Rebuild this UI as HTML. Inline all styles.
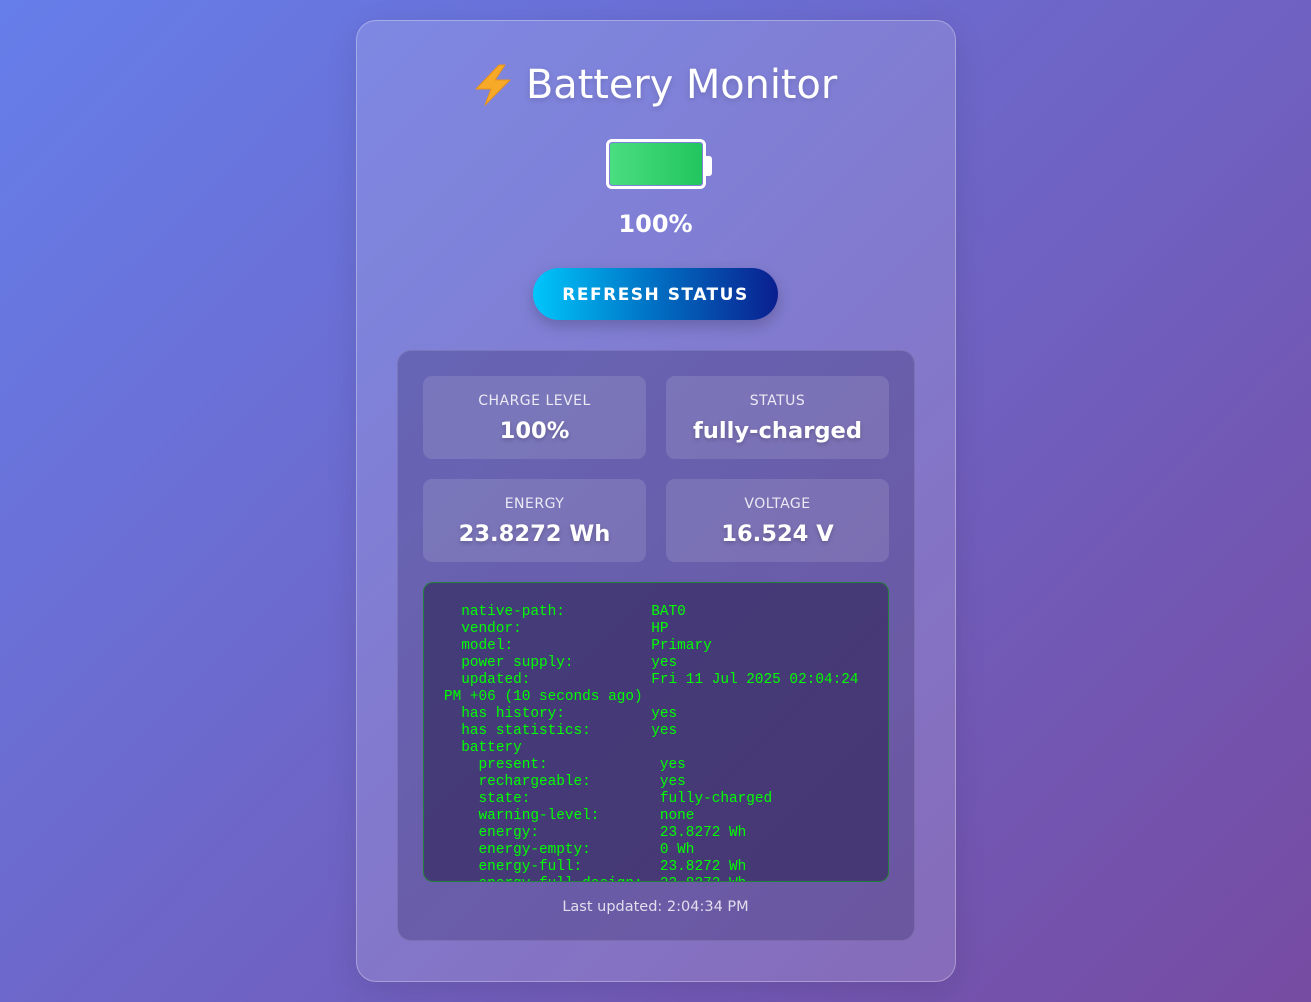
<!DOCTYPE html>
<html><head><meta charset="utf-8"><style>
*{box-sizing:border-box;margin:0;padding:0}
html,body{width:1311px;height:1002px;overflow:hidden}
body{background:linear-gradient(135deg,#667eea 0%,#764ba2 100%);font-family:"DejaVu Sans","Liberation Sans",sans-serif;color:#fff;position:relative}
.card{position:absolute;left:356px;top:20px;width:600px;height:962px;border-radius:20px;background:rgba(255,255,255,0.14);border:1px solid rgba(255,255,255,0.3);box-shadow:0 8px 32px rgba(0,0,0,0.1)}
h1{position:absolute;left:526px;top:59px;font-weight:normal;font-size:39.8px;line-height:52px;text-shadow:0 2px 6px rgba(0,0,0,0.15);white-space:nowrap}
.bolt{position:absolute;left:472px;top:64px;width:44px;height:42px}
.bat{position:absolute;left:606px;top:139px;width:100px;height:50px;border:3px solid #fff;border-radius:6px;padding:0}
.bat .fill{position:absolute;left:1px;top:1px;right:1px;bottom:1px;border-radius:3px;background:linear-gradient(90deg,#4ade80,#22c55e)}
.bat:after{content:"";position:absolute;right:-9px;top:14px;width:6px;height:20px;background:#fff;border-radius:0 3px 3px 0}
.pct{position:absolute;left:0;right:0;top:209px;text-align:center;font-weight:bold;font-size:24px;line-height:30px}
.btn{position:absolute;left:533px;top:268px;width:245px;height:52px;border-radius:26px;background:linear-gradient(90deg,#00c6fb,#0077c8 45%,#0a1f8f 100%);text-align:center;line-height:54px;font-weight:bold;font-size:17px;letter-spacing:1.5px;box-shadow:0 6px 15px rgba(0,0,0,0.2)}
.panel{position:absolute;left:397px;top:350px;width:518px;height:591px;border-radius:14px;background:rgba(40,30,90,0.28);border:1px solid rgba(255,255,255,0.12)}
.stat{position:absolute;width:223px;height:83px;border-radius:9px;background:rgba(255,255,255,0.12);text-align:center}
.stat .l{margin-top:17px;font-size:14px;letter-spacing:0.5px;color:rgba(255,255,255,0.85);line-height:17px}
.stat .v{margin-top:6px;font-size:22.6px;font-weight:bold;line-height:30px;text-shadow:0 2px 4px rgba(0,0,0,0.2)}
.term{position:absolute;left:423px;top:582px;width:466px;height:300px;border-radius:10px;background:rgba(45,35,85,0.6);border:1px solid rgba(0,200,0,0.5);overflow:hidden}
pre{position:absolute;left:20px;top:21px;font-family:"Liberation Mono","DejaVu Sans Mono",monospace;font-size:14.4px;line-height:17px;color:#00ff00;white-space:pre}
.foot{position:absolute;left:0;right:0;top:899px;text-align:center;font-size:14.5px;color:rgba(255,255,255,0.8)}
</style></head><body>
<div class="card"></div>
<svg class="bolt" viewBox="0 0 44 42"><polygon points="27,1 4,25 19,25 13,41 38,16 23,16 33,1" fill="#f7a928" stroke="#e8931a" stroke-width="1" stroke-linejoin="round"/></svg>
<h1>Battery Monitor</h1>
<div class="bat"><div class="fill"></div></div>
<div class="pct">100%</div>
<div class="btn">REFRESH STATUS</div>
<div class="panel"></div>
<div class="stat" style="left:423px;top:376px"><div class="l">CHARGE LEVEL</div><div class="v">100%</div></div>
<div class="stat" style="left:666px;top:376px"><div class="l">STATUS</div><div class="v">fully-charged</div></div>
<div class="stat" style="left:423px;top:479px"><div class="l">ENERGY</div><div class="v">23.8272 Wh</div></div>
<div class="stat" style="left:666px;top:479px"><div class="l">VOLTAGE</div><div class="v">16.524 V</div></div>
<div class="term"><pre>  native-path:          BAT0
  vendor:               HP
  model:                Primary
  power supply:         yes
  updated:              Fri 11 Jul 2025 02:04:24
PM +06 (10 seconds ago)
  has history:          yes
  has statistics:       yes
  battery
    present:             yes
    rechargeable:        yes
    state:               fully-charged
    warning-level:       none
    energy:              23.8272 Wh
    energy-empty:        0 Wh
    energy-full:         23.8272 Wh
    energy-full-design:  23.8272 Wh</pre></div>
<div class="foot">Last updated: 2:04:34 PM</div>
</body></html>
